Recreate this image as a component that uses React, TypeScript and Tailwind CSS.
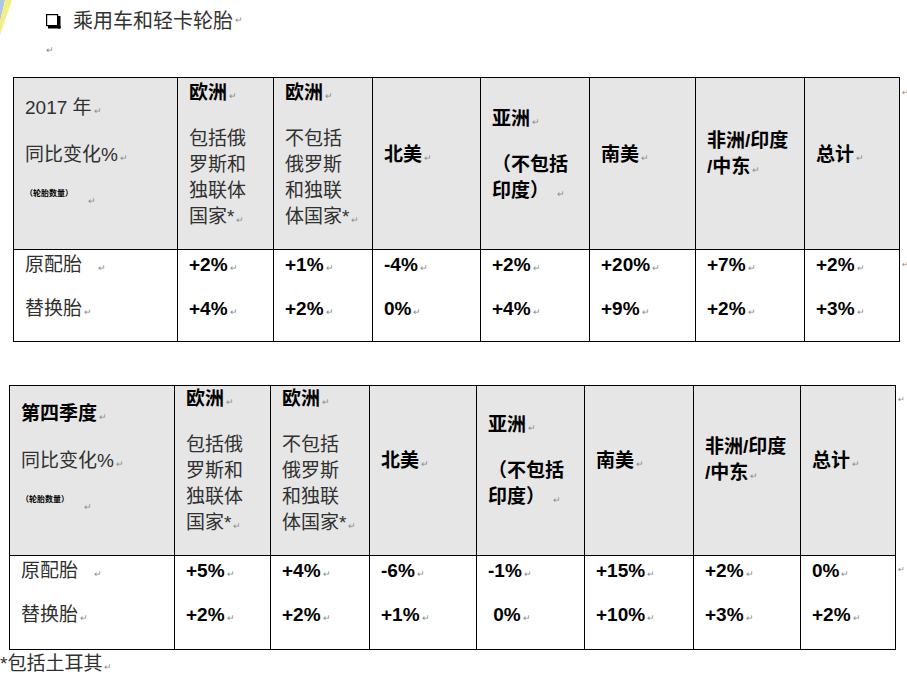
import React from "react";

const F = "font-['Liberation_Sans','Noto_Sans_CJK_SC',sans-serif]";

function M({ cls = "" }: { cls?: string }) {
  return <span className={`text-[9px] text-[#8c8c8c] font-normal ml-[2px] ${cls}`}>↵</span>;
}

function RowMarks({ top, second }: { top: string; second: string }) {
  return (
    <div className="flex flex-col w-[6px] ml-[2px]">
      <span className={`${top} text-[8px] text-[#8c8c8c] leading-[12px]`}>↵</span>
      <span className={`${second} text-[8px] text-[#8c8c8c] leading-[12px]`}>↵</span>
    </div>
  );
}

function DataTableCore({
  cols,
  rows,
  extra,
  title,
  body,
}: {
  cols: string;
  rows: string;
  extra: string;
  title: React.ReactNode;
  body: string[][];
}) {
  const hc = `bg-[#e6e6e6] border-r border-b border-black pl-[11px] ${extra}`;
  const bc = `border-r border-b border-black pl-[11px] pt-[2px]`;
  const line = "block leading-[26px] h-[26px] whitespace-nowrap";
  const wrap = (s: string) =>
    s.split("|").map((t, i, a) => (
      <div key={i} className={line}>
        {t}
        {i === a.length - 1 && <M />}
      </div>
    ));
  return (
    <div className={`grid ${cols} ${rows} border-l border-t border-black text-[19px]`}>
      <div className={hc}>
        <div className={`${line} mt-[15px]`}>{title}</div>
        <div className={`${line} mt-[21px] text-[#303030]`}>
          同比变化%<M />
        </div>
        <div className="block mt-[15px] leading-[14px] h-[14px] whitespace-nowrap">
          <span className="text-[8px] font-bold text-black">（轮胎数量）</span>
          <span className="text-[9px] text-[#8c8c8c] ml-[15px] align-[-8px]">↵</span>
        </div>
      </div>
      <div className={hc}>
        <div className={`${line} font-bold`}>
          欧洲<M />
        </div>
        <div className="mt-[20px] text-[#303030]">{wrap("包括俄|罗斯和|独联体|国家*")}</div>
      </div>
      <div className={hc}>
        <div className={`${line} font-bold`}>
          欧洲<M />
        </div>
        <div className="mt-[20px] text-[#303030]">{wrap("不包括|俄罗斯|和独联|体国家*")}</div>
      </div>
      <div className={hc}>
        <div className={`${line} mt-[62px] font-bold`}>
          北美<M />
        </div>
      </div>
      <div className={hc}>
        <div className={`${line} mt-[26px] font-bold`}>
          亚洲<M />
        </div>
        <div className={`${line} mt-[20px] font-bold`}>（不包括</div>
        <div className={`${line} font-bold`}>
          印度）<M cls="ml-[8px]" />
        </div>
      </div>
      <div className={hc}>
        <div className={`${line} mt-[62px] font-bold`}>
          南美<M />
        </div>
      </div>
      <div className={hc}>
        <div className={`${line} mt-[48px] font-bold`}>非洲/印度</div>
        <div className={`${line} font-bold`}>
          /中东<M />
        </div>
      </div>
      <div className={hc}>
        <div className={`${line} mt-[62px] font-bold`}>
          总计<M />
        </div>
      </div>

      <div className={bc}>
        <div className={`${line} text-[#303030]`}>
          原配胎<M cls="ml-[16px]" />
        </div>
        <div className={`${line} mt-[18px] text-[#303030]`}>
          替换胎<M />
        </div>
      </div>
      {body[0].map((v, i) => (
        <div key={i} className={`${bc} font-bold text-black`}>
          <div className={`${line} whitespace-pre`}>
            {v}
            <M />
          </div>
          <div className={`${line} mt-[18px] whitespace-pre`}>
            {body[1][i]}
            <M />
          </div>
        </div>
      ))}
    </div>
  );
}

export default function App() {
  return (
    <div className={`relative w-[907px] h-[695px] bg-white overflow-hidden text-black ${F}`}>
      <svg className="absolute left-0 top-0" width="16" height="40" viewBox="0 0 16 40">
        <polygon points="0,0 5,0 0,22" fill="#a9c8e8" />
        <polygon points="5,0 12,0 0,35 0,22" fill="#f4ee84" />
      </svg>

      {/* title */}
      <div className="flex items-center h-[26px] mt-[8px] pl-[46px]">
        <svg width="15" height="15" viewBox="0 0 15 15" className="mr-[12px]">
          <rect x="0.6" y="0.6" width="11" height="11" fill="white" stroke="black" strokeWidth="1.2" />
          <rect x="2" y="12" width="12.5" height="2.5" fill="black" />
          <rect x="12" y="2" width="2.5" height="12.5" fill="black" />
        </svg>
        <span className="text-[20px] leading-[26px] text-[#333]">乘用车和轻卡轮胎</span>
        <M />
      </div>
      <div className="h-[26px] pl-[46px] leading-[26px] mt-[1px]">
        <span className="text-[9px] text-[#8c8c8c]">↵</span>
      </div>

      {/* table 1 */}
      <div className="flex mt-[16px] ml-[13px]">
        <DataTableCore
          cols="grid-cols-[164px_96px_99px_108px_109px_106px_109px_95px]"
          rows="grid-rows-[172px_92px]"
          extra="pt-[2px]"
          title={
            <span className="text-[#303030]">
              2017 年<M />
            </span>
          }
          body={[
            ["+2%", "+1%", "-4%", "+2%", "+20%", "+7%", "+2%"],
            ["+4%", "+2%", "0%", "+4%", "+9%", "+2%", "+3%"],
          ]}
        />
        <RowMarks top="mt-[10px]" second="mt-[160px]" />
      </div>

      {/* table 2 */}
      <div className="flex mt-[43px] ml-[9px]">
        <DataTableCore
          cols="grid-cols-[165px_96px_99px_107px_108px_109px_107px_95px]"
          rows="grid-rows-[170px_94px]"
          extra="pt-0"
          title={
            <span className="font-bold">
              第四季度<M />
            </span>
          }
          body={[
            ["+5%", "+4%", "-6%", "-1%", "+15%", "+2%", "0%"],
            ["+2%", "+2%", "+1%", " 0%", "+10%", "+3%", "+2%"],
          ]}
        />
        <RowMarks top="mt-[9px]" second="mt-[158px]" />
      </div>

      {/* footnote */}
      <div className="mt-[4px] leading-[20px] h-[20px] text-[19px] text-[#303030] whitespace-nowrap">
        *包括土耳其<M />
      </div>
    </div>
  );
}
